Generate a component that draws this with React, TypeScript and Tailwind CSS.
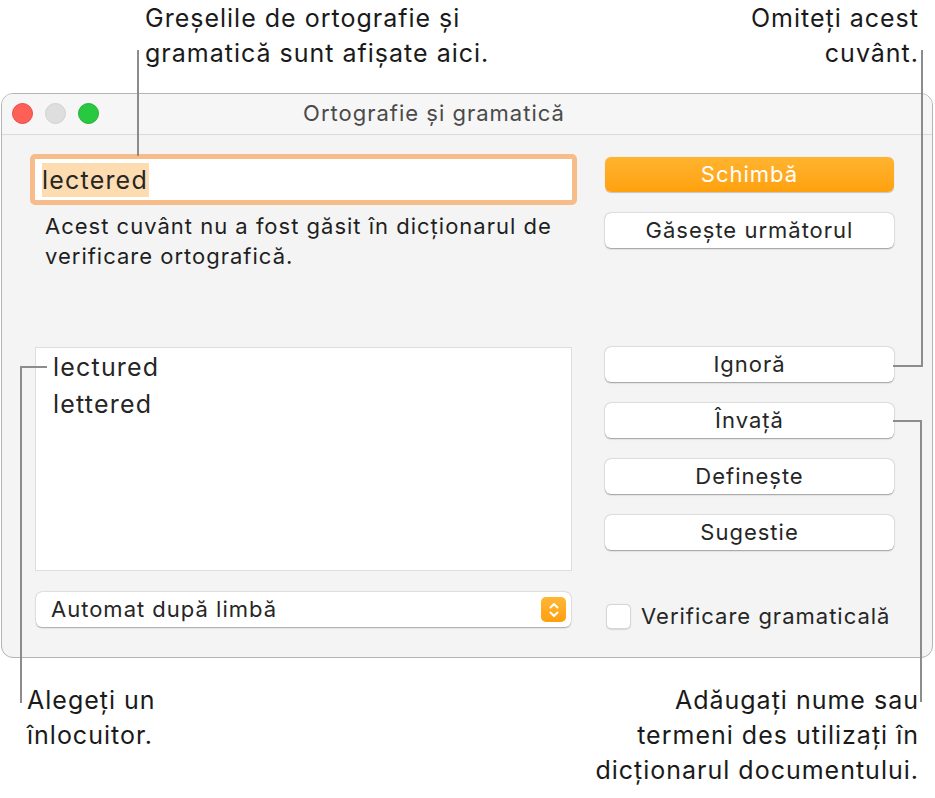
import React from "react";

const Btn = ({ children, className = "" }: { children: React.ReactNode; className?: string }) => (
  <div
    className={`h-[35px] w-[289px] rounded-[6px] bg-white flex items-center justify-center text-[22px] tracking-[1px] text-[#262626] shadow-[0_0.5px_1.5px_rgba(0,0,0,0.35),0_0_0_0.5px_rgba(0,0,0,0.06)] ${className}`}
  >
    {children}
  </div>
);

export default function App() {
  return (
    <div
      className="relative w-[935px] h-[798px] bg-white overflow-hidden text-[#1d1d1d]"
      style={{ fontFamily: "Inter, 'Noto Sans', 'Liberation Sans', sans-serif" }}
    >
      {/* top callouts */}
      <div className="h-[93px] relative">
        <div className="absolute left-[145px] top-[1px] text-[25px] tracking-[1px] leading-[35px] text-[#1a1a1a]">
          <div>Greșelile de ortografie și</div>
          <div>gramatică sunt afișate aici.</div>
        </div>
        <div className="absolute right-[16px] top-[1px] text-[25px] tracking-[1px] leading-[35px] text-[#1a1a1a] text-right">
          <div>Omiteți acest</div>
          <div>cuvânt.</div>
        </div>
      </div>

      {/* window */}
      <div className="ml-[1px] w-[932px] h-[565px] rounded-[12px] border-[1.5px] border-[#b4b4b4] bg-[#f4f4f4] flex flex-col overflow-hidden">
        <div className="h-[41px] shrink-0 border-b border-[#dadada] bg-[#f6f6f6] relative flex items-center justify-center pr-[66px]">
          <div className="absolute left-[10px] top-[9px] flex gap-[12px]">
            <div className="w-[21px] h-[21px] rounded-full bg-[#fe5f57] border border-[#e24b41]" />
            <div className="w-[21px] h-[21px] rounded-full bg-[#dedede] border border-[#d0d0d0]" />
            <div className="w-[21px] h-[21px] rounded-full bg-[#28c840] border border-[#1fae35]" />
          </div>
          <div className="text-[22px] tracking-[1px] text-[#4a4a4a] -mt-[2px]">Ortografie și gramatică</div>
        </div>

        <div className="flex flex-1 pt-[19px]">
          {/* left column */}
          <div className="ml-[28px] w-[548px] flex flex-col">
            <div className="h-[51px] w-[547px] rounded-[5px] border-[5px] border-[#f6bd8a] bg-white flex items-center pl-[7px]">
              <span className="bg-[#fedcb2] text-[25px] tracking-[1.2px] leading-[34px] text-[#262626] pr-[1px]">lectered</span>
            </div>
            <div className="mt-[6px] ml-[15px] text-[22px] tracking-[1px] leading-[30px] text-[#1f1f1f]">
              <div>Acest cuvânt nu a fost găsit în dicționarul de</div>
              <div>verificare ortografică.</div>
            </div>
            <div className="mt-[76px] ml-[5px] w-[537px] h-[224px] bg-white border-[1.5px] border-[#dedede] pl-[17px] pt-[1px] text-[25px] tracking-[1.2px] leading-[37px] text-[#262626]">
              <div>lectured</div>
              <div>lettered</div>
            </div>
            <div className="mt-[21px] ml-[6px] w-[535px] h-[35px] rounded-[6px] bg-white shadow-[0_0.5px_1.5px_rgba(0,0,0,0.3),0_0_0_0.5px_rgba(0,0,0,0.06)] flex items-center pl-[15px] pr-[5px]">
              <span className="flex-1 text-[22px] tracking-[1px] text-[#262626]">Automat după limbă</span>
              <div className="w-[25px] h-[25px] rounded-[5px] bg-gradient-to-b from-[#ffb733] to-[#ff9f0a] flex items-center justify-center">
                <svg width="12" height="18" viewBox="0 0 12 18" fill="none" stroke="white" strokeWidth="2" strokeLinecap="round" strokeLinejoin="round">
                  <path d="M2.5 6.5 L6 3 L9.5 6.5" />
                  <path d="M2.5 11.5 L6 15 L9.5 11.5" />
                </svg>
              </div>
            </div>
          </div>

          {/* right column */}
          <div className="ml-[27px] w-[289px] flex flex-col pt-[3px]">
            <div className="h-[35px] w-[289px] rounded-[6px] bg-gradient-to-b from-[#ffb42e] to-[#ffa10c] flex items-center justify-center text-[22px] tracking-[1px] text-white shadow-[0_0.5px_1px_rgba(0,0,0,0.2)]">
              Schimbă
            </div>
            <Btn className="mt-[21px]">Găsește următorul</Btn>
            <Btn className="mt-[99px]">Ignoră</Btn>
            <Btn className="mt-[21px]">Învață</Btn>
            <Btn className="mt-[21px]">Definește</Btn>
            <Btn className="mt-[21px]">Sugestie</Btn>
            <div className="mt-[50px] flex items-center">
              <div className="ml-[1px] w-[25px] h-[25px] rounded-[5px] bg-white border border-[#d6d6d6] shadow-[0_0.5px_1px_rgba(0,0,0,0.12)]" />
              <span className="ml-[10px] text-[22px] tracking-[1px] text-[#262626]">Verificare gramaticală</span>
            </div>
          </div>
        </div>
      </div>

      {/* bottom callouts */}
      <div className="absolute left-[27px] top-[683px] text-[25px] tracking-[1px] leading-[35px] text-[#1a1a1a]">
        <div>Alegeți un</div>
        <div>înlocuitor.</div>
      </div>
      <div className="absolute right-[16px] top-[683px] text-[25px] tracking-[1px] leading-[35px] text-[#1a1a1a] text-right">
        <div>Adăugați nume sau</div>
        <div>termeni des utilizați în</div>
        <div>dicționarul documentului.</div>
      </div>

      {/* leader lines */}
      <div className="absolute left-[137px] top-[50px] w-[2px] h-[106px] bg-[#8c8c8c]" />
      <div className="absolute left-[921px] top-[50px] w-[2px] h-[317px] bg-[#8c8c8c]" />
      <div className="absolute left-[893px] top-[365px] w-[30px] h-[2px] bg-[#8c8c8c]" />
      <div className="absolute left-[20px] top-[366px] w-[27px] h-[2px] bg-[#8c8c8c]" />
      <div className="absolute left-[20px] top-[366px] w-[2px] h-[337px] bg-[#8c8c8c]" />
      <div className="absolute left-[893px] top-[420px] w-[29px] h-[2px] bg-[#8c8c8c]" />
      <div className="absolute left-[920px] top-[420px] w-[2px] h-[282px] bg-[#8c8c8c]" />
    </div>
  );
}
